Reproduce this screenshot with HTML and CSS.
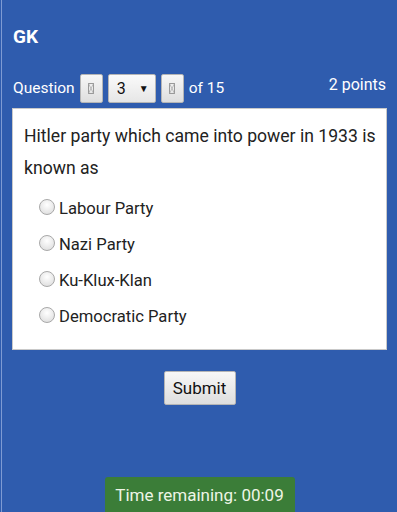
FILE: index.html
```html
<!DOCTYPE html>
<html>
<head>
<meta charset="utf-8">
<link rel="stylesheet" href="styles.css">
</head>
<body>
<div class="page">
  <h1 class="title">GK</h1>
  <div class="qbar">
    <div class="nav">
      <span class="label">Question</span>
      <span class="btn small"><svg width="6" height="11" viewBox="0 0 6 11"><rect x="0.5" y="0.5" width="5" height="10" fill="none" stroke="#999" stroke-width="1"/><path d="M0.5 0.5L5.5 10.5M5.5 0.5L0.5 10.5" stroke="#aaa" stroke-width="0.7"/></svg></span>
      <span class="select"><span>3</span><span class="arrow">▼</span></span>
      <span class="btn small"><svg width="6" height="11" viewBox="0 0 6 11"><rect x="0.5" y="0.5" width="5" height="10" fill="none" stroke="#999" stroke-width="1"/><path d="M0.5 0.5L5.5 10.5M5.5 0.5L0.5 10.5" stroke="#aaa" stroke-width="0.7"/></svg></span>
      <span class="label">of 15</span>
    </div>
    <span class="points">2 points</span>
  </div>
  <div class="card">
    <p class="question">Hitler party which came into power in 1933 is known as</p>
    <ul class="options">
      <li><span class="radio"></span>Labour Party</li>
      <li><span class="radio"></span>Nazi Party</li>
      <li><span class="radio"></span>Ku-Klux-Klan</li>
      <li><span class="radio"></span>Democratic Party</li>
    </ul>
  </div>
  <div class="submit-row"><span class="btn submit">Submit</span></div>
  <div class="timer-row"><div class="timer">Time remaining: 00:09</div></div>
</div>
</body>
</html>
```
FILE: styles.css
```css
html, body {
  margin: 0;
  padding: 0;
  height: 100%;
}
body {
  background: linear-gradient(to right, #2f5cae 1px, #7f9bd3 1px, #7f9bd3 2px, #2f5cae 2px);
  background-color: #2f5cae;
  font-family: Roboto, "Liberation Sans", sans-serif;
  color: #fff;
  overflow: hidden;
}
.page {
  height: 512px;
  display: flex;
  flex-direction: column;
  padding: 0 10px 0 12px;
  box-sizing: border-box;
}
.title {
  margin: 26px 0 0 1px;
  font-size: 19px;
  font-weight: bold;
  line-height: 22px;
  height: 22px;
}
.qbar {
  margin-top: 25px;
  display: flex;
  justify-content: space-between;
  align-items: center;
  height: 30px;
}
.nav {
  display: flex;
  align-items: center;
  gap: 5px;
  margin-left: 1px;
}
.label {
  font-size: 15.5px;
}
.points {
  font-size: 16px;
  margin-top: -8px;
  margin-right: 1px;
}
.btn {
  display: inline-flex;
  align-items: center;
  justify-content: center;
  background: linear-gradient(#f7f7f7, #dedede);
  border: 1px solid #b5b5b5;
  border-radius: 2px;
  color: #111;
  box-sizing: border-box;
}
.small {
  width: 23px;
  height: 29px;
}
.select {
  display: inline-flex;
  align-items: center;
  justify-content: space-between;
  width: 48px;
  height: 29px;
  box-sizing: border-box;
  padding: 0 6px 0 8px;
  background: linear-gradient(#fafafa, #e6e6e6);
  border: 1px solid #b5b5b5;
  border-radius: 2px;
  color: #111;
  font-size: 16px;
}
.arrow {
  font-size: 10px;
}
.card {
  margin-top: 5px;
  background: #fff;
  border: 1px solid #c9c9c9;
  color: #222;
  padding: 11px 6px 15px 11px;
  height: 242px;
  box-sizing: border-box;
}
.question {
  margin: 0;
  font-size: 17.6px;
  line-height: 32px;
}
.options {
  list-style: none;
  margin: 7px 0 0 0;
  padding: 0 0 0 15px;
}
.options li {
  display: flex;
  align-items: center;
  font-size: 16.6px;
  height: 36px;
  line-height: 36px;
}
.radio {
  width: 14px;
  height: 14px;
  border-radius: 50%;
  border: 1px solid #a8a8a8;
  background: radial-gradient(circle at 50% 35%, #ffffff, #d9d9d9);
  margin-right: 4px;
  margin-top: -5px;
  flex: none;
}
.submit-row {
  display: flex;
  justify-content: center;
  margin-top: 21px;
}
.submit {
  width: 72px;
  height: 34px;
  font-size: 17px;
}
.timer-row {
  margin-top: auto;
  display: flex;
  justify-content: center;
}
.timer {
  background: #3b7d38;
  color: #eef5e6;
  font-size: 17px;
  width: 190px;
  height: 35px;
  box-sizing: border-box;
  padding-top: 8px;
  text-align: center;
  border-radius: 3px 3px 0 0;
}
```
